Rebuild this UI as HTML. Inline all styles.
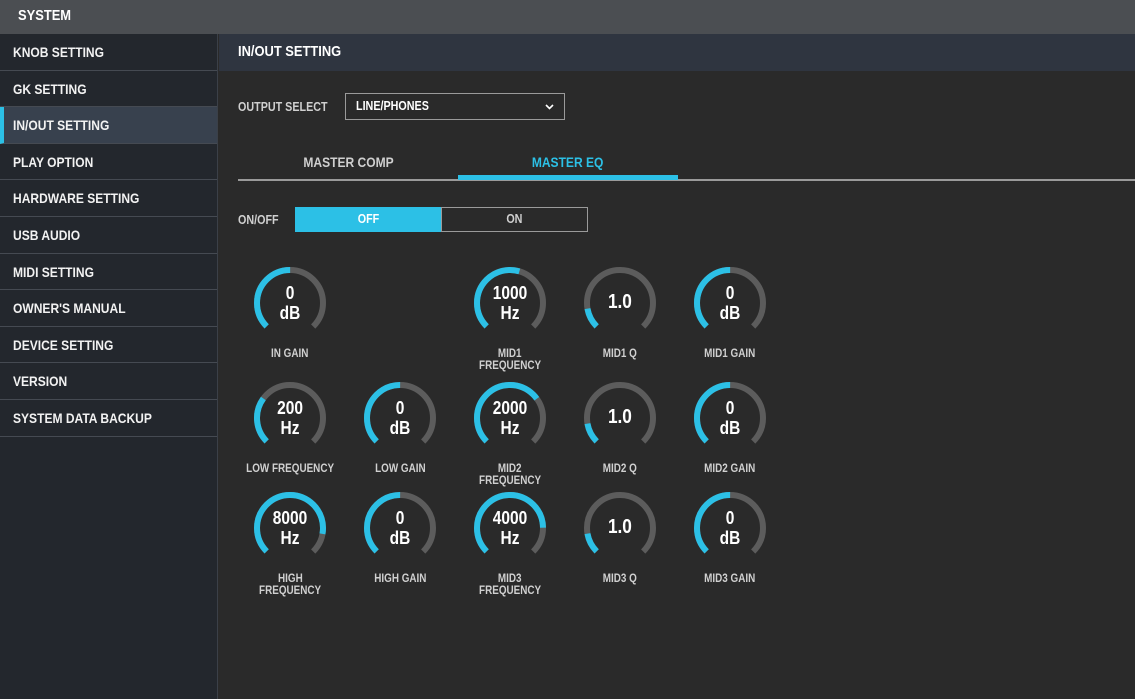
<!DOCTYPE html>
<html><head><meta charset="utf-8"><style>
*{margin:0;padding:0;box-sizing:border-box}
body{width:1135px;height:699px;overflow:hidden;background:#2a2a2a;font-family:"Liberation Sans",sans-serif;font-weight:bold;color:#fff;position:relative}
.n{display:inline-block;transform:scaleX(.86);transform-origin:left center;white-space:nowrap}
.c{display:inline-block;transform:scaleX(.86);transform-origin:center center;white-space:nowrap}
.top{position:absolute;left:0;top:0;width:1135px;height:34px;background:#4b4e52;font-size:15px;padding:7px 0 0 18px}
.side{position:absolute;left:0;top:34px;width:218px;height:665px;background:#23272d;border-right:1px solid #3b4048}
.side div{height:36.6px;border-bottom:1px solid #454a52;font-size:14px;padding:10px 0 0 13px;color:#f2f2f2}
.side .act{background:#38414e;border-left:4px solid #2cc0e6;padding-left:9px}
.hdr{position:absolute;left:219px;top:34px;width:916px;height:37px;background:#2f3540;font-size:15px;padding:9px 0 0 19px}
.abs{position:absolute}
.lbl{color:#d0d0d0;font-size:12.5px}
.kl{position:absolute;width:110px;text-align:center;color:#d0d0d0;font-size:11.5px;line-height:12px}
.kv{position:absolute;width:80px;text-align:center;font-size:18px;line-height:20px;color:#fff}
</style></head><body>
<div class="top"><span class="n">SYSTEM</span></div>
<div class="side">
<div><span class="n">KNOB SETTING</span></div><div><span class="n">GK SETTING</span></div><div class="act"><span class="n">IN/OUT SETTING</span></div><div><span class="n">PLAY OPTION</span></div><div><span class="n">HARDWARE SETTING</span></div><div><span class="n">USB AUDIO</span></div><div><span class="n">MIDI SETTING</span></div><div><span class="n">OWNER'S MANUAL</span></div><div><span class="n">DEVICE SETTING</span></div><div><span class="n">VERSION</span></div><div><span class="n">SYSTEM DATA BACKUP</span></div>
</div>
<div class="hdr"><span class="n">IN/OUT SETTING</span></div>
<div class="abs lbl" style="left:238px;top:100px"><span class="n">OUTPUT SELECT</span></div>
<div class="abs" style="left:345px;top:93px;width:220px;height:27px;border:1px solid #9a9a9a;font-size:12.5px;padding:5px 0 0 10px"><span class="n">LINE/PHONES</span>
<svg style="position:absolute;right:10px;top:10px" width="9" height="6"><path d="M1 1L4.5 4.5L8 1" stroke="#fff" stroke-width="1.6" fill="none"/></svg></div>
<div class="abs" style="left:238px;top:179px;width:897px;height:2px;background:#9a9a9a"></div>
<div class="abs" style="left:458px;top:175px;width:220px;height:5px;background:#2cc0e6"></div>
<div class="abs" style="left:238px;top:154px;width:220px;text-align:center;color:#cfcfcf;font-size:14px"><span class="c">MASTER COMP</span></div>
<div class="abs" style="left:458px;top:154px;width:220px;text-align:center;color:#2cc0e6;font-size:14px"><span class="c">MASTER EQ</span></div>
<div class="abs lbl" style="left:238px;top:213px"><span class="n">ON/OFF</span></div>
<div class="abs" style="left:295px;top:207px;width:147px;height:25px;background:#2cc0e6;text-align:center;font-size:12.5px;padding-top:5px"><span class="c">OFF</span></div>
<div class="abs" style="left:441px;top:207px;width:147px;height:25px;border:1px solid #9a9a9a;text-align:center;font-size:12.5px;padding-top:4px;color:#cfcfcf"><span class="c">ON</span></div>
<svg class="abs" style="left:0;top:0" width="1135" height="699">
<g fill="none" stroke-width="6">
<g id="k"></g>
</g>
</svg>
<div id="knobs"></div>
<script>
var K=[
[290,303,.5,"0","dB","IN GAIN",""],
[510,303,.56,"1000","Hz","MID1","FREQUENCY"],
[620,303,.13,"1.0","","MID1 Q",""],
[730,303,.5,"0","dB","MID1 GAIN",""],
[290,418,.3,"200","Hz","LOW FREQUENCY",""],
[400,418,.5,"0","dB","LOW GAIN",""],
[510,418,.7,"2000","Hz","MID2","FREQUENCY"],
[620,418,.13,"1.0","","MID2 Q",""],
[730,418,.5,"0","dB","MID2 GAIN",""],
[290,528,.87,"8000","Hz","HIGH","FREQUENCY"],
[400,528,.5,"0","dB","HIGH GAIN",""],
[510,528,.83,"4000","Hz","MID3","FREQUENCY"],
[620,528,.13,"1.0","","MID3 Q",""],
[730,528,.5,"0","dB","MID3 GAIN",""]];
var C=2*Math.PI*33,L=C*0.75,s="",h="";
K.forEach(function(k){
s+='<circle cx="'+k[0]+'" cy="'+k[1]+'" r="33" stroke="#5c5c5c" stroke-dasharray="'+L+' '+C+'" transform="rotate(135 '+k[0]+' '+k[1]+')"/>';
s+='<circle cx="'+k[0]+'" cy="'+k[1]+'" r="33" stroke="#2cc0e6" stroke-dasharray="'+(L*k[2])+' '+C+'" transform="rotate(135 '+k[0]+' '+k[1]+')"/>';
if(k[4]) h+='<div class="kv" style="left:'+(k[0]-40)+'px;top:'+(k[1]-20)+'px"><span class="c">'+k[3]+'</span><br><span class="c">'+k[4]+'</span></div>';
else h+='<div class="kv" style="left:'+(k[0]-40)+'px;top:'+(k[1]-11)+'px;font-size:20px"><span class="c">'+k[3]+'</span></div>';
h+='<div class="kl" style="left:'+(k[0]-55)+'px;top:'+(k[1]+45)+'px"><span class="c">'+k[5]+'</span>'+(k[6]?'<br><span class="c">'+k[6]+'</span>':'')+'</div>';
});
document.getElementById("k").outerHTML=s;
document.getElementById("knobs").innerHTML=h;
</script>
</body></html>
